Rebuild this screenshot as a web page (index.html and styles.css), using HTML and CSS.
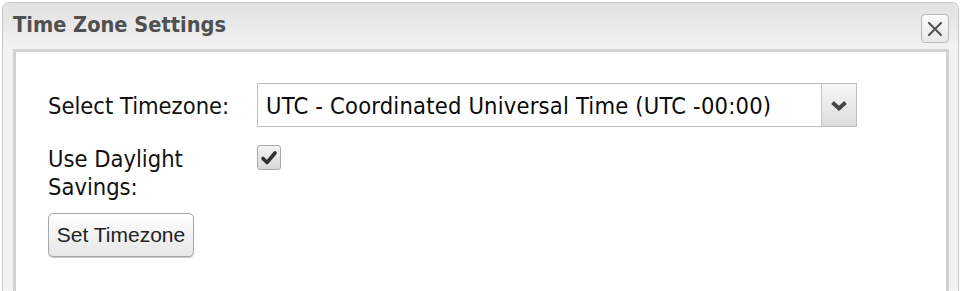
FILE: index.html
```html
<!DOCTYPE html>
<html>
<head>
<meta charset="utf-8">
<link rel="stylesheet" href="styles.css">
</head>
<body>
<div class="dialog">
  <div class="titlebar">
    <span class="title">Time Zone Settings</span>
    <span class="close">
      <svg width="16" height="16" viewBox="0 0 16 16"><path d="M2 2 L14 14 M14 2 L2 14" stroke="#555" stroke-width="2.2" stroke-linecap="round" fill="none"/></svg>
    </span>
  </div>
  <div class="panel">
    <div class="form">
      <span class="lbl lbl-single">Select Timezone:</span>
      <div class="select">
        <span class="select-text">UTC - Coordinated Universal Time (UTC -00:00)</span>
        <span class="select-arrow">
          <svg width="18" height="11" viewBox="0 0 18 11"><path d="M2.5 2.5 L9 8.5 L15.5 2.5" stroke="#454545" stroke-width="3.8" fill="none" stroke-linejoin="miter"/></svg>
        </span>
      </div>
      <span class="lbl">Use Daylight<br>Savings:</span>
      <div class="check-cell">
        <span class="checkbox">
          <svg width="22" height="22" viewBox="0 0 22 22"><path d="M5 11.5 L9 15.5 L17 6" stroke="#333" stroke-width="3.6" fill="none" stroke-linecap="round" stroke-linejoin="round"/></svg>
        </span>
      </div>
    </div>
    <button class="submit">Set Timezone</button>
  </div>
</div>
</body>
</html>
```

FILE: styles.css
```css
html, body {
  margin: 0;
  padding: 0;
  background: #ffffff;
  height: 100%;
  overflow: hidden;
}

.dialog {
  margin: 2px 3px 0 2px;
  height: calc(100vh - 2px);
  box-sizing: border-box;
  display: flex;
  flex-direction: column;
  border: 1px solid #c6c6c6;
  border-bottom: none;
  border-radius: 7px 7px 0 0;
  background: #f2f2f2;
  box-shadow: inset 0 0 0 1px #f7f7f7;
}

.titlebar {
  height: 45px;
  flex: none;
  display: flex;
  align-items: center;
  justify-content: space-between;
  padding: 0 9px 0 10px;
  background: linear-gradient(#e2e2e2, #f2f2f2);
  border-radius: 6px 6px 0 0;
}

.title {
  font-family: "DejaVu Sans Condensed", "DejaVu Sans", sans-serif;
  font-stretch: condensed;
  font-weight: bold;
  font-size: 21.6px;
  color: #505050;
  margin-top: -2px;
}

.close {
  width: 26px;
  height: 27px;
  margin-top: 6px;
  border: 1px solid #b8b8b8;
  border-radius: 4px;
  background: linear-gradient(#fbfbfb, #e9e9e9);
  display: flex;
  align-items: center;
  justify-content: center;
}

.panel {
  flex: 1;
  margin: 1px 9px 0 10px;
  border: 3px solid #d2d2d2;
  border-bottom: none;
  background: #ffffff;
  padding: 31px 0 0 32px;
  box-sizing: border-box;
}

.form {
  display: grid;
  grid-template-columns: 209px 600px;
  row-gap: 18px;
  font-family: "DejaVu Sans Condensed", "DejaVu Sans", sans-serif;
  font-stretch: condensed;
  font-size: 23.5px;
  line-height: 28px;
  color: #111;
}

.lbl-single {
  align-self: center;
  margin-top: 1px;
}

.select {
  height: 44px;
  border: 1px solid #bdbdbd;
  box-sizing: border-box;
  display: flex;
  align-items: stretch;
  background: #fff;
}

.select-text {
  flex: 1;
  padding-left: 8px;
  display: flex;
  align-items: center;
  color: #0a0a0a;
  margin-top: 1px;
  white-space: nowrap;
  letter-spacing: 0.2px;
}

.select-arrow {
  width: 34px;
  border-left: 1px solid #c4c4c4;
  background: linear-gradient(#f7f7f7, #dcdcdc);
  display: flex;
  align-items: center;
  justify-content: center;
}

.checkbox {
  width: 22px;
  height: 23px;
  border: 1px solid #a9a9a9;
  border-radius: 3px;
  background: linear-gradient(#f4f4f4, #d9d9d9);
  display: flex;
  align-items: center;
  justify-content: center;
}

.submit {
  margin-top: 12px;
  width: 146px;
  height: 44px;
  padding: 0;
  border: 1px solid #a6a6a6;
  border-radius: 5px;
  background: linear-gradient(#ffffff, #e6e6e6);
  font-family: "Liberation Sans", Arial, sans-serif;
  font-size: 21px;
  color: #222;
  box-shadow: 0 1px 0 #c8c8c8;
}
```
